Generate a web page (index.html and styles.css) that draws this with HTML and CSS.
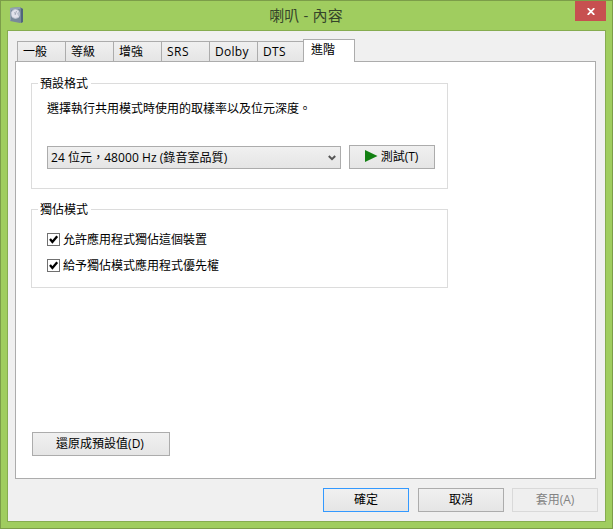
FILE: index.html
```html
<!DOCTYPE html>
<html lang="zh-Hant">
<head>
<meta charset="utf-8">
<title>喇叭 - 內容</title>
<link rel="stylesheet" href="styles.css">
</head>
<body>
<div class="window">
  <header class="titlebar">
    <svg class="app-icon" width="14" height="17" viewBox="0 0 14 17">
      <path d="M0 1 10 0 13 2V15L10 16 0 14Z" fill="#78899a"/>
      <path d="M11 1 13 2V15L11 16Z" fill="#50657c"/>
      <path d="M0 1 10 0V2L1 3V13L0 14Z" fill="#93a3b1"/>
      <ellipse cx="5.5" cy="7" rx="4.6" ry="5" fill="#b9c0ce"/>
      <path d="M1.5 5 5 2.5 9 4 7 6.5 9 10 5 11 2 9.5Z" fill="#e2e2ec"/>
      <path d="M4 5.5 6 7M6.5 4 5 8" stroke="#a5acb9"/>
    </svg>
    <h1 class="title">喇叭 - 內容</h1>
    <button class="close" aria-label="關閉">
      <svg width="8" height="7" viewBox="0 0 8 7"><path d="M.7.2 7.3 6.8M7.3.2.7 6.8" stroke="#fff" stroke-width="1.8"/></svg>
    </button>
  </header>
  <main class="client">
    <nav class="tabs">
      <span class="tab">一般</span>
      <span class="tab">等級</span>
      <span class="tab">增強</span>
      <span class="tab tab-srs">SRS</span>
      <span class="tab tab-dolby">Dolby</span>
      <span class="tab tab-last">DTS</span>
      <span class="tab active">進階</span>
    </nav>
    <section class="panel">
      <fieldset class="group format">
        <legend>預設格式</legend>
        <p class="hint">選擇執行共用模式時使用的取樣率以及位元深度。</p>
        <div class="format-row">
          <div class="select">
            <span class="select-text">24 位元，48000 Hz (錄音室品質)</span>
            <svg width="8" height="6" viewBox="0 0 8 6"><path d="M.8 1 4 4.2 7.2 1" fill="none" stroke="#555" stroke-width="2"/></svg>
          </div>
          <button class="btn test">
            <svg width="13" height="12" viewBox="0 0 13 12"><path d="M0 0 12.5 6 0 12Z" fill="#128012"/></svg>
            <span>測試(T)</span>
          </button>
        </div>
      </fieldset>
      <fieldset class="group exclusive">
        <legend>獨佔模式</legend>
        <div class="check">
          <svg width="13" height="13" viewBox="0 0 13 13"><rect x=".5" y=".5" width="12" height="12" fill="#fff" stroke="#707070"/><path d="M3 6 5.4 9 10.2 3.2" fill="none" stroke="#000" stroke-width="2.3"/></svg>
          <span>允許應用程式獨佔這個裝置</span>
        </div>
        <div class="check">
          <svg width="13" height="13" viewBox="0 0 13 13"><rect x=".5" y=".5" width="12" height="12" fill="#fff" stroke="#707070"/><path d="M3 6 5.4 9 10.2 3.2" fill="none" stroke="#000" stroke-width="2.3"/></svg>
          <span>給予獨佔模式應用程式優先權</span>
        </div>
      </fieldset>
      <button class="btn restore">還原成預設值(D)</button>
    </section>
    <footer class="actions">
      <button class="btn primary">確定</button>
      <button class="btn">取消</button>
      <button class="btn disabled">套用(A)</button>
    </footer>
  </main>
</div>
</body>
</html>
```

FILE: styles.css
```css
* { box-sizing: border-box; }
body {
  margin: 0;
  font: 12px/16px "Open Sans", "Noto Sans CJK TC", sans-serif;
  color: #000;
}
.window {
  width: 613px;
  height: 529px;
  padding: 0 6px 6px;
  border: 1px solid #7c9d49;
  background: #a0cd5f;
}
.titlebar {
  display: flex;
  align-items: flex-start;
  height: 29px;
}
.app-icon { margin: 6px 0 0 3px; }
.title {
  flex: 1;
  margin: 3px 0 0 13px;
  text-align: center;
  font-size: 15px;
  line-height: 22px;
  letter-spacing: .15px;
  font-weight: 400;
  color: #35452a;
}
.close {
  display: flex;
  align-items: center;
  justify-content: center;
  width: 31px;
  height: 20px;
  padding: 1px 0 0;
  border: 0;
  background: #c75050;
}
.client {
  height: 492px;
  padding: 8px 9px 0 7px;
  border: 1px solid #86ac50;
  background: #f0f0f0;
}
.tabs {
  display: flex;
  align-items: flex-end;
  height: 22px;
  padding-left: 2px;
}
.tab {
  width: 49px;
  height: 20px;
  margin-right: -1px;
  padding: 1px 0 0 5px;
  border: 1px solid #acacac;
  border-bottom: 0;
  background: linear-gradient(#f0f0f0, #e5e5e5);
  line-height: 17px;
}
.tab-srs { letter-spacing: .5px; }
.tab-dolby { letter-spacing: .3px; }
.tab-last { width: 47px; letter-spacing: .3px; }
.tab.active {
  position: relative;
  width: 52px;
  height: 23px;
  margin-bottom: -1px;
  padding: 1px 0 0 7px;
  background: #fff;
}
.panel {
  height: 418px;
  padding: 13px 0 0 15px;
  border: 1px solid #acacac;
  background: #fff;
}
.group {
  width: 417px;
  margin: 0;
  padding: 0 12px 0 15px;
  border: 1px solid #dcdcdc;
}
.group legend {
  margin-left: -9px;
  padding: 0 3px 0 2px;
  line-height: 17px;
}
.format { height: 114px; }
.exclusive { height: 87px; margin-top: 12px; }
.hint { margin: 9px 0 0; }
.format-row {
  display: flex;
  align-items: flex-end;
  gap: 8px;
  height: 52px;
}
.select {
  display: flex;
  align-items: center;
  justify-content: space-between;
  width: 294px;
  height: 23px;
  padding: 0 4px 0 3px;
  border: 1px solid #acacac;
  background: linear-gradient(#f0f0f0, #e5e5e5);
}
.select-text { letter-spacing: .06px; }
.btn {
  display: flex;
  align-items: center;
  justify-content: center;
  width: 86px;
  height: 24px;
  padding: 0;
  border: 1px solid #acacac;
  background: linear-gradient(#f0f0f0, #e5e5e5);
  font: inherit;
  color: #000;
}
.test { gap: 3px; padding-right: 1px; }
.test svg { margin-bottom: 2px; }
.check {
  display: flex;
  align-items: center;
  gap: 3px;
  height: 26px;
}
.check span { padding-top: 2px; }
.exclusive legend + .check { margin-top: 8px; }
.restore { width: 138px; margin: 144px 0 0 1px; padding-right: 2px; }
.actions {
  display: flex;
  justify-content: flex-end;
  gap: 9px;
  margin: 9px -2px 0 0;
}
.primary { border-color: #3399ff; }
.disabled {
  margin-left: -1px;
  border-color: #d9d9d9;
  background: #efefef;
  color: #838383;
}
```
